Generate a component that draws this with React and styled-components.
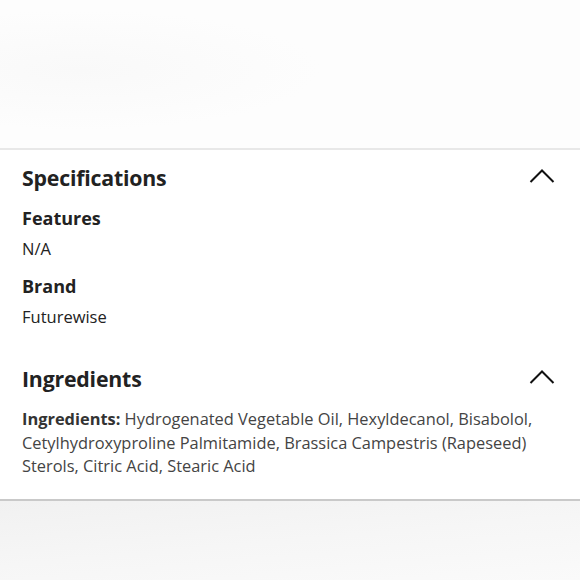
import styled, { createGlobalStyle } from 'styled-components'

const Global = createGlobalStyle`
  html, body {
    margin: 0;
    padding: 0;
    background: #fdfdfd;
  }
  body {
    font-family: "Open Sans", "Noto Sans", sans-serif;
    color: #222;
  }
`

const Page = styled.div`
  width: 580px;
  height: 580px;
  display: flex;
  flex-direction: column;
  overflow: hidden;
`

const TopFade = styled.div`
  height: 148px;
  background:
    radial-gradient(ellipse 240px 60px at 80px 70px, #f9f9f9, rgba(253,253,253,0) 100%),
    #fdfdfd;
  border-bottom: 2px solid #e8e8e8;
`

const Panel = styled.div`
  background: #fff;
  padding: 0 22px;
  border-bottom: 2px solid #c9c9c9;
`

const Section = styled.section`
  padding: ${(p) => p.$top}px 0 ${(p) => p.$bottom}px;
`

const Header = styled.div`
  display: flex;
  align-items: center;
  justify-content: space-between;
  height: 28px;
`

const Title = styled.h2`
  margin: 0;
  font-size: 21.3px;
  font-weight: 700;
  letter-spacing: -0.2px;
  color: #222;
`

const Chevron = styled.svg`
  width: 26px;
  height: 16px;
  margin-right: 3px;
  margin-bottom: 2px;
`

const Label = styled.h3`
  margin: 0;
  font-size: 18px;
  font-weight: 700;
  color: #222;
  line-height: 24px;
`

const Value = styled.p`
  margin: 8px 0 0;
  font-size: 16.5px;
  line-height: 22px;
  color: #222;
`

const Item = styled.div`
  margin-top: ${(p) => p.$gap}px;
`

const Text = styled.p`
  margin: 15px 0 0;
  font-size: 16.4px;
  line-height: 23.5px;
  color: #444;

  b {
    font-weight: 700;
    color: #333;
  }
`

const Bottom = styled.div`
  flex: 1;
  background: linear-gradient(175deg, #f1f1f1 0%, #f6f6f6 50%, #fafafa 100%);
`

const Up = () => (
  <Chevron viewBox="0 0 26 16">
    <path d="M1.5 14 L13 2.5 L24.5 14" fill="none" stroke="#111" strokeWidth="2" />
  </Chevron>
)

export default function App() {
  return (
    <Page>
      <Global />
      <TopFade />
      <Panel>
        <Section $top={13} $bottom={20}>
          <Header>
            <Title>Specifications</Title>
            <Up />
          </Header>
          <Item $gap={15}>
            <Label>Features</Label>
            <Value>N/A</Value>
          </Item>
          <Item $gap={14}>
            <Label>Brand</Label>
            <Value>Futurewise</Value>
          </Item>
        </Section>
        <Section $top={16} $bottom={21}>
          <Header>
            <Title>Ingredients</Title>
            <Up />
          </Header>
          <Text>
            <b>Ingredients:</b> Hydrogenated Vegetable Oil, Hexyldecanol, Bisabolol,
            Cetylhydroxyproline Palmitamide, Brassica Campestris (Rapeseed) Sterols,
            Citric Acid, Stearic Acid
          </Text>
        </Section>
      </Panel>
      <Bottom />
    </Page>
  )
}
